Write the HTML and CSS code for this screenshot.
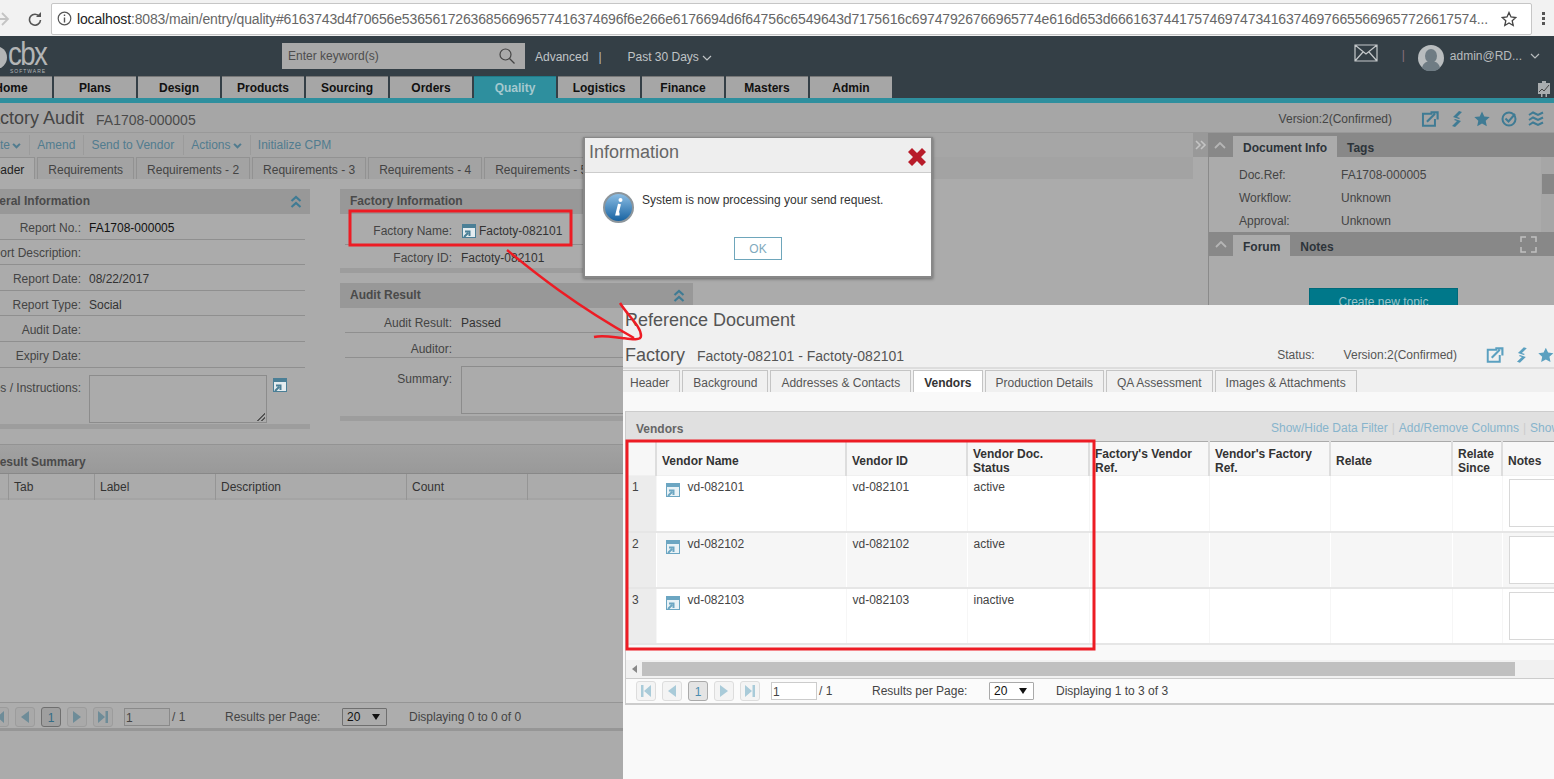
FILE: index.html
```html
<!DOCTYPE html>
<html lang="en">
<head>
    <meta charset="UTF-8">
    <title>Factory Audit</title>
    <link rel="stylesheet" href="styles.css">
</head>
<body>
    <svg class="defs" width="0" height="0">
        <symbol id="ico-open" viewBox="0 0 14 14">
            <path d="M0 0h14v14H0z" fill="currentColor"/>
            <path d="M1 4h12v9H1z" fill="#fff" fill-opacity=".85"/>
            <path d="M2 13l4-4M3 7.500h4.500V12" fill="none" stroke="currentColor" stroke-width="2"/>
        </symbol>
        <symbol id="ico-ext" viewBox="0 0 20 18">
            <path d="M12 3H1.500v13.500H15V9" fill="none" stroke="currentColor" stroke-width="2.200"/>
            <path d="M6 12l9-9M10 1.500h8v8" fill="none" stroke="currentColor" stroke-width="2.400"/>
        </symbol>
        <symbol id="ico-bolt" viewBox="0 0 12 16">
            <path d="M8 0l3 1-5 5 3 1-1 1-6-2zM4 16l-3-1 5-5-3-1 1-1 6 2z" fill="currentColor"/>
        </symbol>
        <symbol id="ico-star" viewBox="0 0 16 16">
            <path d="M8 .5l2.300 5 5.400.6-4 3.700 1.100 5.400L8 12.500l-4.800 2.700 1.100-5.400-4-3.700 5.400-.6z" fill="currentColor"/>
        </symbol>
        <symbol id="ico-check" viewBox="0 0 16 16">
            <circle cx="8" cy="8" r="6.500" fill="none" stroke="currentColor" stroke-width="2"/>
            <path d="M4.500 7.500l3 3L14 3" fill="none" stroke="currentColor" stroke-width="2"/>
        </symbol>
        <symbol id="ico-waves" viewBox="0 0 16 16">
            <path d="M1 4l4-2.500 5 2.500 5-2.500M1 9l4-2.500L10 9l5-2.500M1 14l4-2.500 5 2.500 5-2.500" fill="none" stroke="currentColor" stroke-width="2"/>
        </symbol>
        <symbol id="ico-collapse" viewBox="0 0 12 14">
            <path d="M1.500 6L6 2l4.500 4M1.500 12L6 8l4.500 4" fill="none" stroke="currentColor" stroke-width="2.200"/>
        </symbol>
        <symbol id="ico-caret" viewBox="0 0 10 6">
            <path d="M1 1l4 4 4-4" fill="none" stroke="currentColor" stroke-width="1.200"/>
        </symbol>
        <symbol id="ico-caret-bold" viewBox="0 0 10 7">
            <path d="M1 1l4 4 4-4" fill="none" stroke="currentColor" stroke-width="2.400"/>
        </symbol>
        <symbol id="ico-first" viewBox="0 0 10 12"><path d="M0 0h2.500v12H0zM10 0v12L3 6z" fill="currentColor"/></symbol>
        <symbol id="ico-prev" viewBox="0 0 10 12"><path d="M9 0v12L1 6z" fill="currentColor"/></symbol>
        <symbol id="ico-next" viewBox="0 0 10 12"><path d="M1 0v12l8-6z" fill="currentColor"/></symbol>
        <symbol id="ico-last" viewBox="0 0 10 12"><path d="M10 0H7.500v12H10zM0 0v12l7-6z" fill="currentColor"/></symbol>
    </svg>

    <div class="screen">
        <div class="browser-bar">
            <svg class="browser-back" width="12" height="14" viewBox="0 0 12 14"><path d="M0 7h10M4 1l6 6-6 6" fill="none" stroke="#c4c4c4" stroke-width="1.800"/></svg>
            <svg class="browser-reload" width="14" height="14" viewBox="0 0 14 14"><path d="M11.500 4.500A5.500 5.500 0 1 0 12.500 8" fill="none" stroke="#555" stroke-width="1.600"/><path d="M8 5h5V0z" fill="#555"/></svg>
            <div class="address">
                <svg width="15" height="15" viewBox="0 0 15 15"><circle cx="7.500" cy="7.500" r="6.300" fill="none" stroke="#555" stroke-width="1.200"/><path d="M7.500 6.500v5M7.500 3.500v1.600" stroke="#555" stroke-width="1.400"/></svg>
                <span class="address-url"><b>localhost</b>:8083/main/entry/quality#6163743d4f70656e53656172636856696577416374696f6e266e6176694d6f64756c6549643d7175616c69747926766965774e616d653d666163744175746974734163746976655669657726617574...</span>
                <svg class="address-star" width="16" height="16" viewBox="0 0 16 16"><path d="M8 1.500l2 4.500 4.800.5-3.600 3.200 1 4.800L8 12l-4.200 2.500 1-4.800L1.200 6.500 6 6z" fill="none" stroke="#444" stroke-width="1.300"/></svg>
            </div>
            <span class="browser-menu"><i></i><i></i><i></i></span>
        </div>

        <header class="topbar">
            <div class="topbar-row">
                <div class="logo">
                    <span class="logo-mark"></span>
                    <div class="logo-text">cbx</div>
                    <small class="logo-sub">SOFTWARE</small>
                </div>
                <div class="search">
                    <span>Enter keyword(s)</span>
                    <svg width="16" height="16" viewBox="0 0 16 16"><circle cx="6.500" cy="6.500" r="5.500" fill="none" stroke="#444" stroke-width="1.200"/><path d="M10.500 10.500l5 5" stroke="#444" stroke-width="1.300"/></svg>
                </div>
                <a class="top-link">Advanced</a>
                <span class="top-sep">|</span>
                <a class="top-link top-range">Past 30 Days <svg width="10" height="6"><use href="#ico-caret"/></svg></a>
                <div class="top-user">
                    <svg class="user-mail" width="24" height="18" viewBox="0 0 24 18"><path d="M1 1h22v16H1zM1 1l11 9 11-9M1 17l8-9M23 17l-8-9" fill="none" stroke="#c4c8ca" stroke-width="1.200"/></svg>
                    <span class="user-sep">|</span>
                    <svg width="26" height="26" viewBox="0 0 26 26"><circle cx="13" cy="13" r="13" fill="#b9bdbf"/><ellipse cx="13" cy="11" rx="6" ry="7" fill="#6f7c84"/><path d="M4 23c1-6 6-7 9-7s8 1 9 7a13 13 0 0 1-18 0z" fill="#6f7c84"/></svg>
                    <span class="user-name">admin@RD...</span>
                    <svg class="user-caret" width="10" height="6"><use href="#ico-caret"/></svg>
                </div>
            </div>
            <nav class="nav">
                <a>Home</a>
                <a>Plans</a>
                <a>Design</a>
                <a>Products</a>
                <a>Sourcing</a>
                <a>Orders</a>
                <a class="active">Quality</a>
                <a>Logistics</a>
                <a>Finance</a>
                <a>Masters</a>
                <a>Admin</a>
                <svg class="nav-chart" width="12" height="16" viewBox="0 0 12 16"><path d="M4 0h4v2H4zM0 2h12v11H0z" fill="#a9adaf"/><path d="M1 11l3-3 2 2 5-6" fill="none" stroke="#444"/><path d="M3 13h1.500v3H3zM7.500 13H9v3H7.500z" fill="#a9adaf"/></svg>
            </nav>
        </header>
        <div class="teal-line"></div>

        <div class="content">
            <div class="title-bar">
                <h1>Factory Audit</h1>
                <span class="doc-no">FA1708-000005</span>
                <span class="version">Version:2(Confirmed)</span>
                <div class="title-icons">
                    <svg width="19" height="16"><use href="#ico-ext"/></svg>
                    <svg width="12" height="16"><use href="#ico-bolt"/></svg>
                    <svg width="16" height="16"><use href="#ico-star"/></svg>
                    <svg width="16" height="16"><use href="#ico-check"/></svg>
                    <svg width="16" height="16"><use href="#ico-waves"/></svg>
                </div>
            </div>

            <div class="workspace">
                <main class="main">
                    <div class="toolbar">
                        <a>Create <svg width="9" height="6"><use href="#ico-caret-bold"/></svg></a>
                        <a>Amend</a>
                        <a class="tool-send">Send to Vendor</a>
                        <a>Actions <svg width="9" height="6"><use href="#ico-caret-bold"/></svg></a>
                        <a>Initialize CPM</a>
                    </div>
                    <div class="tabs">
                        <a class="active">Header</a>
                        <a>Requirements</a>
                        <a>Requirements - 2</a>
                        <a>Requirements - 3</a>
                        <a>Requirements - 4</a>
                        <a>Requirements - 5</a>
                    </div>

                    <div class="panels">
                        <section class="panel panel-general">
                            <h2>General Information <svg width="12" height="14"><use href="#ico-collapse"/></svg></h2>
                            <div class="row"><label>Report No.:</label><span class="strong">FA1708-000005</span></div>
                            <div class="row"><label>Report Description:</label></div>
                            <div class="row"><label>Report Date:</label><span>08/22/2017</span></div>
                            <div class="row"><label>Report Type:</label><span>Social</span></div>
                            <div class="row"><label>Audit Date:</label></div>
                            <div class="row"><label>Expiry Date:</label></div>
                            <div class="row row-area">
                                <label>Notes / Instructions:</label>
                                <div class="area"><i class="grip"></i></div>
                                <svg class="open-ico" width="14" height="14"><use href="#ico-open"/></svg>
                            </div>
                        </section>

                        <div class="panel-stack">
                            <section class="panel panel-right">
                                <h2>Factory Information</h2>
                                <div class="row row-tall"><label>Factory Name:</label><svg class="open-ico" width="14" height="14"><use href="#ico-open"/></svg><span>Factoty-082101</span></div>
                                <div class="row row-last"><label>Factory ID:</label><span>Factoty-082101</span></div>
                            </section>
                            <section class="panel panel-right panel-audit">
                                <h2>Audit Result <svg width="12" height="14"><use href="#ico-collapse"/></svg></h2>
                                <div class="row"><label>Audit Result:</label><span>Passed</span></div>
                                <div class="row"><label>Auditor:</label></div>
                                <div class="row row-area"><label>Summary:</label><div class="area"></div></div>
                            </section>
                        </div>
                    </div>

                    <section class="summary">
                        <h2>Result Summary</h2>
                        <div class="summary-head">
                            <span></span>
                            <span>Tab</span>
                            <span>Label</span>
                            <span>Description</span>
                            <span>Count</span>
                        </div>
                        <div class="summary-body"></div>
                        <div class="pager pager-dim">
                            <a><svg width="10" height="12"><use href="#ico-first"/></svg></a>
                            <a><svg width="10" height="12"><use href="#ico-prev"/></svg></a>
                            <a class="current">1</a>
                            <a><svg width="10" height="12"><use href="#ico-next"/></svg></a>
                            <a><svg width="10" height="12"><use href="#ico-last"/></svg></a>
                            <span class="page-input">1</span>
                            <span class="page-of">/ 1</span>
                            <span class="page-label">Results per Page:</span>
                            <span class="page-select">20<i></i></span>
                            <span>Displaying 0 to 0 of 0</span>
                        </div>
                    </section>
                </main>

                <aside class="sidebar">
                    <div class="side-bar">
                        <span class="side-toggle"><svg width="12" height="10" viewBox="0 0 12 10"><path d="M1 1l4 4-4 4M6 1l4 4-4 4" fill="none" stroke="currentColor" stroke-width="1.600"/></svg></span>
                        <span class="side-up"><svg width="12" height="7" viewBox="0 0 12 7"><path d="M1 6l5-5 5 5" fill="none" stroke="currentColor" stroke-width="1.800"/></svg></span>
                        <a class="active">Document Info</a>
                        <a>Tags</a>
                    </div>
                    <div class="side-info">
                        <dl>
                            <dt>Doc.Ref:</dt><dd>FA1708-000005</dd>
                            <dt>Workflow:</dt><dd>Unknown</dd>
                            <dt>Approval:</dt><dd>Unknown</dd>
                        </dl>
                        <div class="side-scroll"><i></i></div>
                    </div>
                    <div class="side-body">
                        <div class="side-bar side-bar-sub">
                            <span class="side-up"><svg width="12" height="7" viewBox="0 0 12 7"><path d="M1 6l5-5 5 5" fill="none" stroke="currentColor" stroke-width="1.800"/></svg></span>
                            <a class="active">Forum</a>
                            <a>Notes</a>
                            <svg class="side-expand" width="17" height="17" viewBox="0 0 17 17"><path d="M1 6V1h5M11 1h5v5M1 11v5h5M11 16h5v-5" fill="none" stroke="#c0c0c0" stroke-width="1.500"/></svg>
                        </div>
                        <button class="topic-btn">Create new topic</button>
                    </div>
                </aside>
            </div>
        </div>

        <div class="modal">
            <div class="modal-head">
                <span>Information</span>
                <svg width="18" height="18" viewBox="0 0 18 18"><path d="M0 4l4-4 5 5 5-5 4 4-5 5 5 5-4 4-5-5-5 5-4-4 5-5z" fill="#b81c2a"/></svg>
            </div>
            <div class="modal-body">
                <svg width="31" height="31" viewBox="0 0 31 31">
                    <defs><linearGradient id="info-fill" x1="0" y1="0" x2="0" y2="1"><stop offset="0" stop-color="#8fc0e6"/><stop offset="1" stop-color="#14609f"/></linearGradient></defs>
                    <circle cx="15.500" cy="15.500" r="14.500" fill="url(#info-fill)" stroke="#8c959b" stroke-width="2"/>
                    <path d="M16.500 12l-2.500 10h2.500" fill="none" stroke="#fff" stroke-width="3"/>
                    <circle cx="17.500" cy="8" r="2" fill="#fff"/>
                </svg>
                <p>System is now processing your send request.</p>
            </div>
            <div class="modal-foot"><button>OK</button></div>
        </div>

        <div class="ref-doc">
            <div class="ref-title">Reference Document</div>
            <div class="ref-head">
                <h1>Factory</h1>
                <span class="doc-no">Factoty-082101 - Factoty-082101</span>
                <span class="ref-status">Status:</span>
                <span class="ref-version">Version:2(Confirmed)</span>
                <div class="title-icons">
                    <svg width="19" height="16"><use href="#ico-ext"/></svg>
                    <svg width="12" height="16"><use href="#ico-bolt"/></svg>
                    <svg width="16" height="16"><use href="#ico-star"/></svg>
                </div>
            </div>
            <div class="ref-tabs">
                <a>Header</a>
                <a>Background</a>
                <a>Addresses &amp; Contacts</a>
                <a class="active">Vendors</a>
                <a>Production Details</a>
                <a>QA Assessment</a>
                <a>Images &amp; Attachments</a>
            </div>
            <div class="ref-body">
                <div class="vendors">
                    <div class="vendors-head">
                        <h2>Vendors</h2>
                        <div class="vendors-links">
                            <a>Show/Hide Data Filter</a><i>|</i><a>Add/Remove Columns</a><i>|</i><a>Show</a>
                        </div>
                    </div>
                    <table class="vendors-table">
                        <colgroup>
                            <col class="c-num"><col class="c-name"><col class="c-id"><col class="c-status"><col class="c-ref"><col class="c-ref2"><col class="c-relate"><col class="c-since"><col class="c-notes">
                        </colgroup>
                        <thead>
                            <tr>
                                <th></th>
                                <th>Vendor Name</th>
                                <th>Vendor ID</th>
                                <th>Vendor Doc.<br>Status</th>
                                <th>Factory's Vendor Ref.</th>
                                <th>Vendor's Factory Ref.</th>
                                <th>Relate</th>
                                <th>Relate Since</th>
                                <th>Notes</th>
                            </tr>
                        </thead>
                        <tbody>
                            <tr>
                                <td class="num">1</td>
                                <td><svg class="open-ico" width="14" height="14"><use href="#ico-open"/></svg>vd-082101</td>
                                <td>vd-082101</td>
                                <td>active</td>
                                <td></td><td></td><td></td><td></td>
                                <td><div class="note-box"></div></td>
                            </tr>
                            <tr>
                                <td class="num">2</td>
                                <td><svg class="open-ico" width="14" height="14"><use href="#ico-open"/></svg>vd-082102</td>
                                <td>vd-082102</td>
                                <td>active</td>
                                <td></td><td></td><td></td><td></td>
                                <td><div class="note-box"></div></td>
                            </tr>
                            <tr>
                                <td class="num">3</td>
                                <td><svg class="open-ico" width="14" height="14"><use href="#ico-open"/></svg>vd-082103</td>
                                <td>vd-082103</td>
                                <td>inactive</td>
                                <td></td><td></td><td></td><td></td>
                                <td><div class="note-box"></div></td>
                            </tr>
                        </tbody>
                    </table>
                    <div class="h-scroll">
                        <svg width="5" height="8" viewBox="0 0 5 8"><path d="M5 0v8L0 4z" fill="#888"/></svg>
                        <i></i>
                    </div>
                    <div class="pager">
                        <a><svg width="10" height="12"><use href="#ico-first"/></svg></a>
                        <a><svg width="10" height="12"><use href="#ico-prev"/></svg></a>
                        <a class="current">1</a>
                        <a><svg width="10" height="12"><use href="#ico-next"/></svg></a>
                        <a><svg width="10" height="12"><use href="#ico-last"/></svg></a>
                        <span class="page-input">1</span>
                        <span class="page-of">/ 1</span>
                        <span class="page-label">Results per Page:</span>
                        <span class="page-select">20<i></i></span>
                        <span>Displaying 1 to 3 of 3</span>
                    </div>
                </div>
            </div>
        </div>

        <!-- red marks drawn on top of the screenshot -->
        <svg class="marks" width="1554" height="779" viewBox="0 0 1554 779">
            <g fill="none" stroke="#ed1c24">
                <rect x="350" y="211" width="221" height="34" stroke-width="3"/>
                <rect x="627" y="441" width="467" height="208" stroke-width="3"/>
                <path d="M507 250C535 273 575 305 634 338" stroke-width="2.500"/>
                <path d="M620 303C628 316 641 326 641 336C641 341 630 339 622 338C612 337 603 335 594 337" stroke-width="2.500"/>
            </g>
        </svg>
    </div>
</body>
</html>
```
FILE: styles.css
```css
* {
    box-sizing: border-box;
}
body {
    margin: 0;
    font-family: "Liberation Sans", Arial, sans-serif;
    font-size: 12px;
    color: #333;
}
a {
    cursor: pointer;
}
.defs {
    position: absolute;
}
.screen {
    position: relative;
    width: 1554px;
    height: 779px;
    overflow: hidden;
    background: #ababab;
}

/* browser chrome */
.browser-bar {
    display: flex;
    align-items: center;
    height: 36px;
    background: #f2f2f2;
    padding-top: 1px;
}
.browser-back {
    flex: none;
    margin-left: -2px;
}
.browser-reload {
    margin-left: 18px;
}
.address {
    display: flex;
    align-items: center;
    gap: 5px;
    width: 1481px;
    height: 32px;
    margin-left: 9px;
    padding: 0 14px 0 5px;
    background: #fff;
    border: 1px solid #c6c6c6;
    border-radius: 2px;
}
.address-url {
    flex: 1;
    white-space: nowrap;
    overflow: hidden;
    font-size: 14px;
    color: #666;
    letter-spacing: -.15px;
}
.address-url b {
    font-weight: normal;
    color: #222;
}
.browser-menu {
    display: flex;
    flex-direction: column;
    gap: 2px;
    margin-left: 10px;
}
.browser-menu i {
    width: 3px;
    height: 3px;
    background: #555;
}

/* dark top bar */
.topbar {
    height: 62px;
    background: #343f46;
}
.topbar-row {
    display: flex;
    height: 40px;
    color: #b8bcbe;
}
.logo {
    position: relative;
    width: 282px;
}
.logo-mark {
    position: absolute;
    left: -16px;
    top: 10px;
    width: 23px;
    height: 23px;
    border-radius: 50%;
    background: #b3b5b6;
}
.logo-text {
    position: absolute;
    left: 8px;
    top: 0;
    font-size: 33px;
    line-height: 36px;
    letter-spacing: -2px;
    color: #b3b5b6;
    transform: scaleX(.84);
    transform-origin: left;
}
.logo-sub {
    position: absolute;
    left: 10px;
    top: 32px;
    font-size: 5px;
    line-height: 6px;
    letter-spacing: 1px;
    color: #b3b5b6;
}
.search {
    display: flex;
    align-items: center;
    justify-content: space-between;
    width: 243px;
    height: 26px;
    margin-top: 7px;
    padding: 0 10px 0 6px;
    background: #a9a9a9;
    color: #4d4d4d;
}
.top-link {
    margin: 14px 0 0 10px;
    color: #c0c4c6;
}
.top-sep {
    margin: 14px 0 0 10px;
}
.top-range {
    margin-left: 26px;
}
.top-user {
    display: flex;
    align-items: center;
    margin-left: auto;
    padding: 4px 14px 0 0;
}
.user-mail {
    margin-bottom: 10px;
}
.user-sep {
    margin: 0 13px 6px 24px;
    color: #8b6f7a;
}
.user-name {
    margin: 0 8px 4px 6px;
}
.user-caret {
    margin-bottom: 4px;
}
.nav {
    display: flex;
    gap: 2px;
    height: 22px;
    margin-left: -30px;
}
.nav a {
    width: 82px;
    line-height: 23px;
    text-align: center;
    font-weight: bold;
    color: #111;
    background: #a6a6a6;
    border-top: 1px solid #777;
}
.nav a.active {
    background: #2e8f9e;
    color: #a5c9cf;
    border-top-color: #1f7b89;
}
.nav-chart {
    margin: 5px 0 0 644px;
}
.teal-line {
    height: 5px;
    background: #2e8f9e;
}

/* dimmed page behind the dialog */
.content {
    width: 1584px;
    margin-left: -30px;
}
.title-bar {
    display: flex;
    align-items: center;
    height: 30px;
    padding: 2px 10px 0 9px;
    background: #a6a6a6;
    border-bottom: 1px solid #999;
}
h1 {
    margin: 0;
    font-size: 18px;
    font-weight: normal;
    color: #444;
}
.doc-no {
    margin-left: 12px;
    font-size: 14px;
    color: #4a4a4a;
    padding-top: 2px;
}
.version {
    margin-left: auto;
    color: #444;
}
.title-icons {
    display: flex;
    align-items: center;
    gap: 11px;
    margin-left: 29px;
    color: #3f7b94;
}
.workspace {
    display: grid;
    grid-template-columns: 1223px 361px;
}
.toolbar {
    display: flex;
    align-items: center;
    height: 24px;
    background: #a6a6a6;
    color: #517c8f;
}
.toolbar a {
    padding: 0 8px 0 7px;
    line-height: 20px;
    border-left: 1px solid #9b9b9b;
}
.toolbar a:first-child {
    margin-left: -5px;
    border-left: 0;
    padding-right: 8px;
    padding-left: 9px;
}
.toolbar a.tool-send {
    padding-right: 9px;
}
.toolbar svg {
    margin-left: -1px;
}
.tabs {
    display: flex;
    gap: 2px;
    height: 22px;
    padding-left: 4px;
    background: #a3a3a3;
}
.tabs a {
    padding: 0 10px;
    line-height: 25px;
    color: #444;
    border: 1px solid #929292;
    border-bottom: 0;
}
.tabs a.active {
    background: #ababab;
    color: #222;
}
.panels {
    display: flex;
    gap: 30px;
    margin-top: 10px;
}
.panel h2,
.summary h2 {
    margin: 0;
    height: 25px;
    padding: 0 8px 0 10px;
    font-size: 12px;
    line-height: 25px;
    color: #4a4a4a;
    background: #989898;
}
.panel h2 {
    display: flex;
    align-items: center;
    justify-content: space-between;
}
.panel h2 svg {
    color: #3f7b94;
}
.panel {
    border-bottom: 5px solid #9d9d9d;
}
.row {
    display: flex;
    align-items: center;
    height: 25.600px;
    margin-right: 5px;
    padding-top: 3px;
    border-bottom: 1px solid #8f8f8f;
    color: #333;
}
.row label {
    flex: none;
    display: flex;
    justify-content: flex-end;
    color: #444;
    white-space: nowrap;
    margin-right: 8px;
}
.strong {
    color: #111;
}
.panel-general {
    width: 340px;
    height: 240px;
}
.panel-general h2 {
    padding-left: 6px;
}
.panel-general .row label {
    width: 111px;
}
.row-area {
    align-items: flex-start;
    height: 55px;
    padding-top: 7px;
    border-bottom: 0;
}
.row-area label {
    padding-top: 6px;
}
.area {
    position: relative;
    width: 178px;
    height: 48px;
    border: 1px solid #8c8c8c;
}
.grip {
    position: absolute;
    right: 1px;
    bottom: 1px;
    width: 8px;
    height: 8px;
    background: linear-gradient(135deg, transparent 50%, #555 50%, #555 60%, transparent 60%, transparent 75%, #555 75%, #555 85%, transparent 85%);
}
.open-ico {
    flex: none;
    color: #4b7f96;
}
.panel-general .open-ico {
    margin: 3px 0 0 6px;
}
.panel-stack {
    display: flex;
    flex-direction: column;
    gap: 10px;
    width: 353px;
}
.panel-right .row {
    margin-left: 5px;
}
.panel-right .row label {
    width: 107px;
    margin-right: 9px;
}
.row-tall {
    height: 31px;
}
.row-tall .open-ico {
    margin: 0 3px 0 1px;
}
.row-last {
    height: 23px;
    border-bottom: 0;
}
.panel-right .row-area .area {
    width: 230px;
}
.panel-audit .row {
    height: 25px;
    padding-top: 5px;
}
.panel-audit .row:nth-child(3) {
    padding-top: 7px;
}
.panel-audit .row-area {
    height: 58px;
    padding-top: 8px;
}
.panel-audit .row-area label {
    padding-top: 6px;
}
.summary {
    margin-top: 15px;
    border-top: 1px solid #939393;
}
.summary h2 {
    height: 28px;
    padding-left: 21px;
    line-height: 35px;
    background: linear-gradient(#a2a2a2, #999);
}
.summary-head {
    display: grid;
    grid-template-columns: 39px 86px 121px 191px 121px;
    height: 27px;
    background: #ababab;
    border-top: 1px solid #888;
    border-bottom: 2px solid #a4a4a4;
    color: #333;
    line-height: 26px;
}
.summary-head span {
    padding-left: 5px;
    border-right: 1px solid #959595;
}
.summary-body {
    height: 202px;
    background: #b0b0b0;
}
.pager {
    display: flex;
    align-items: center;
    gap: 6px;
    height: 27px;
    padding-left: 10px;
    color: #444;
}
.pager a {
    display: flex;
    align-items: center;
    justify-content: center;
    width: 20px;
    height: 20px;
    border: 1px solid #ddd;
    border-radius: 3px;
    color: #a9cbd9;
    background: #f4f4f4;
}
.pager a.current {
    background: #e4e4e4;
    border-color: #aaa;
    color: #4a8cb0;
    padding-top: 2px;
}
.page-input {
    width: 46px;
    height: 18px;
    margin-left: 5px;
    padding-left: 1px;
    line-height: 18px;
    background: #fff;
    border: 1px solid #ccc;
}
.page-of {
    width: 47px;
    margin-left: -4px;
}
.page-label {
    width: 111px;
}
.page-select {
    position: relative;
    width: 45px;
    height: 18px;
    margin-right: 16px;
    padding-left: 4px;
    color: #111;
    line-height: 16px;
    background: #fff;
    border: 1px solid #aaa;
    border-radius: 1px;
}
.page-select i {
    position: absolute;
    right: 6px;
    top: 5px;
    border: 4px solid transparent;
    border-top: 6px solid #111;
    border-bottom: 0;
}
.pager-dim {
    box-sizing: content-box;
    height: 23px;
    padding: 2px 0 0 19px;
    background: #adadad;
    border-top: 1px solid #959595;
    border-bottom: 3px solid #969696;
}
.pager-dim a {
    background: #a9a9a9;
    border-color: #9c9c9c;
    color: #6e8c98;
}
.pager-dim a.current {
    background: #9f9f9f;
    border-color: #6f6f6f;
    color: #346c85;
}
.pager-dim .page-input {
    background: #ababab;
    border-color: #8a8a8a;
}
.pager-dim .page-select {
    background: #ababab;
    border-color: #6f6f6f;
}

/* side column */
.side-bar {
    display: flex;
    align-items: flex-end;
    height: 24px;
    background: #888;
}
.side-toggle {
    align-self: stretch;
    width: 15px;
    padding: 7px 0 0 2px;
    background: #999;
    color: #c4c4c4;
    line-height: 0;
}
.side-up {
    align-self: center;
    width: 25px;
    padding-left: 6px;
    color: #b5b5b5;
    line-height: 0;
}
.side-bar a {
    height: 21px;
    padding: 0 10px;
    font-weight: bold;
    line-height: 25px;
    color: #2d343a;
}
.side-bar a.active {
    background: #ababab;
}
.side-info {
    display: flex;
    height: 75px;
    margin-left: 15px;
    border-left: 1px solid #8a8a8a;
}
dl {
    display: grid;
    grid-template-columns: 102px 1fr;
    grid-auto-rows: 23px;
    flex: 1;
    margin: 7px 0 0 30px;
    line-height: 23px;
}
dt {
    color: #444;
}
dd {
    margin: 0;
    color: #444;
}
.side-scroll {
    position: relative;
    width: 13px;
    background: #a6a6a6;
}
.side-scroll i {
    position: absolute;
    top: 17px;
    left: 1px;
    width: 12px;
    height: 20px;
    background: #878787;
}
.side-body {
    margin-left: 15px;
    height: 500px;
    border-left: 1px solid #8a8a8a;
}
.side-bar-sub {
    position: relative;
}
.side-bar-sub .side-up {
    width: 24px;
}
.side-expand {
    position: absolute;
    right: 17px;
    top: 4px;
}
.topic-btn {
    display: block;
    width: 149px;
    height: 30px;
    margin: 32px 0 0 100px;
    padding: 0 0 2px;
    font: inherit;
    color: #9cc4cb;
    background: #00788a;
    border: 1px solid #006a7a;
}

/* dialog */
.modal {
    position: absolute;
    left: 583px;
    top: 137px;
    width: 350px;
    height: 141px;
    background: #fff;
    border: 1px solid #888;
    border-width: 1px 2px 2px 2px;
    box-shadow: 0 1px 3px rgba(0, 0, 0, .4);
}
.modal-head {
    display: flex;
    justify-content: space-between;
    height: 35px;
    padding: 2px 5px 0 4px;
    font-size: 18px;
    line-height: 24px;
    color: #666;
    background: #eee;
    border-bottom: 1px solid #ccc;
}
.modal-head svg {
    margin-top: 8px;
}
.modal-body {
    display: flex;
    gap: 8px;
    padding: 19px 0 0 18px;
}
.modal-body p {
    margin: 0;
    padding-top: 1px;
    line-height: 14px;
    color: #333;
}
.modal-foot {
    padding-top: 14px;
    text-align: center;
}
.modal-foot button {
    width: 48px;
    height: 23px;
    font: inherit;
    color: #7fa9bd;
    background: #fff;
    border: 1px solid #6ea6bb;
}

/* reference document pasted over the page */
.ref-doc {
    position: absolute;
    left: 623px;
    top: 305px;
    width: 931px;
    height: 474px;
    background: #f0f0f0;
}
.ref-title {
    height: 35px;
    padding: 4px 0 0 2px;
    font-size: 18px;
    line-height: 22px;
    color: #555;
}
.ref-head {
    display: flex;
    align-items: center;
    height: 29px;
    padding: 3px 0 0 2px;
    border-bottom: 2px solid #ddd;
}
.ref-head .doc-no {
    margin-left: 12px;
    color: #555;
}
.ref-head h1 {
    color: #555;
}
.ref-status {
    margin-left: auto;
    color: #555;
}
.ref-version {
    margin-left: 29px;
    color: #555;
}
.ref-head .title-icons {
    width: 68px;
    margin-left: 29px;
    flex: none;
    color: #5ba0c0;
}
.ref-tabs {
    display: flex;
    gap: 2px;
    height: 22px;
    margin-top: 1px;
}
.ref-tabs a {
    padding: 0 10px;
    line-height: 25px;
    color: #555;
    background: #f0f0f0;
    border: 1px solid #c4c4c4;
    border-bottom: 0;
}
.ref-tabs a:first-child {
    padding: 0 10px 0 7px;
    border-left: 0;
}
.ref-tabs a.active {
    font-weight: bold;
    color: #333;
    background: #fff;
}
.ref-body {
    height: 387px;
    padding: 19px 0 0 2px;
    background: #f9f9f9;
}
.vendors {
    border-left: 1px solid #ccc;
    border-top: 1px solid #ccc;
}
.vendors-head {
    display: flex;
    justify-content: space-between;
    height: 29px;
    padding: 9px 0 0 10px;
    background: #e0e0e0;
}
.vendors-head h2 {
    margin: 0;
    font-size: 12px;
    line-height: 16px;
    color: #666;
}
.vendors-links {
    color: #87b4cc;
    white-space: nowrap;
    width: 283px;
    overflow: hidden;
}
.vendors-links i {
    margin: 0 4px;
    font-style: normal;
    color: #ccc;
}
.vendors-table {
    width: 977px;
    table-layout: fixed;
    border-collapse: collapse;
    background: #fff;
    border-top: 1px solid #aaa;
}
.c-num { width: 30px; }
.c-name { width: 190px; }
.c-id { width: 121px; }
.c-status { width: 122px; }
.c-ref { width: 120px; }
.c-ref2 { width: 121px; }
.c-relate { width: 122px; }
.c-since { width: 50px; }
.c-notes { width: 101px; }
.vendors-table th {
    height: 34px;
    padding: 5px 4px 0 5px;
    font-size: 12px;
    line-height: 14px;
    text-align: left;
    color: #333;
    background: #f7f7f7;
    border-right: 2px solid #ddd;
    border-bottom: 1px solid #f0f0f0;
}
.vendors-table td {
    height: 56px;
    padding: 3px 5px 0 6px;
    vertical-align: top;
    line-height: 16px;
    color: #444;
    border-right: 1px solid #f6f6f6;
    border-bottom: 2px solid #e6e6e6;
}
.vendors-table tr:nth-child(2) td {
    background: #f6f6f6;
    border-right-color: #fff;
}
.vendors-table td.num {
    padding-left: 6px;
    background: #ececec !important;
}
.vendors-table .open-ico {
    margin: 4px 8px -4px 3px;
    vertical-align: top;
    color: #6ca6c2;
}
.note-box {
    width: 60px;
    height: 48px;
    background: #fff;
    border: 1px solid #d8d8d8;
}
.h-scroll {
    display: flex;
    align-items: center;
    gap: 5px;
    height: 18px;
    margin-top: 15px;
    padding-left: 6px;
    background: #f1f1f1;
}
.h-scroll i {
    width: 873px;
    height: 14px;
    background: #c0c0c0;
}
.ref-doc .pager {
    height: 27px;
    border-top: 1px solid #ccc;
    border-bottom: 2px solid #ccc;
    background: #fbfbfb;
}
.marks {
    position: absolute;
    left: 0;
    top: 0;
    pointer-events: none;
}
```
